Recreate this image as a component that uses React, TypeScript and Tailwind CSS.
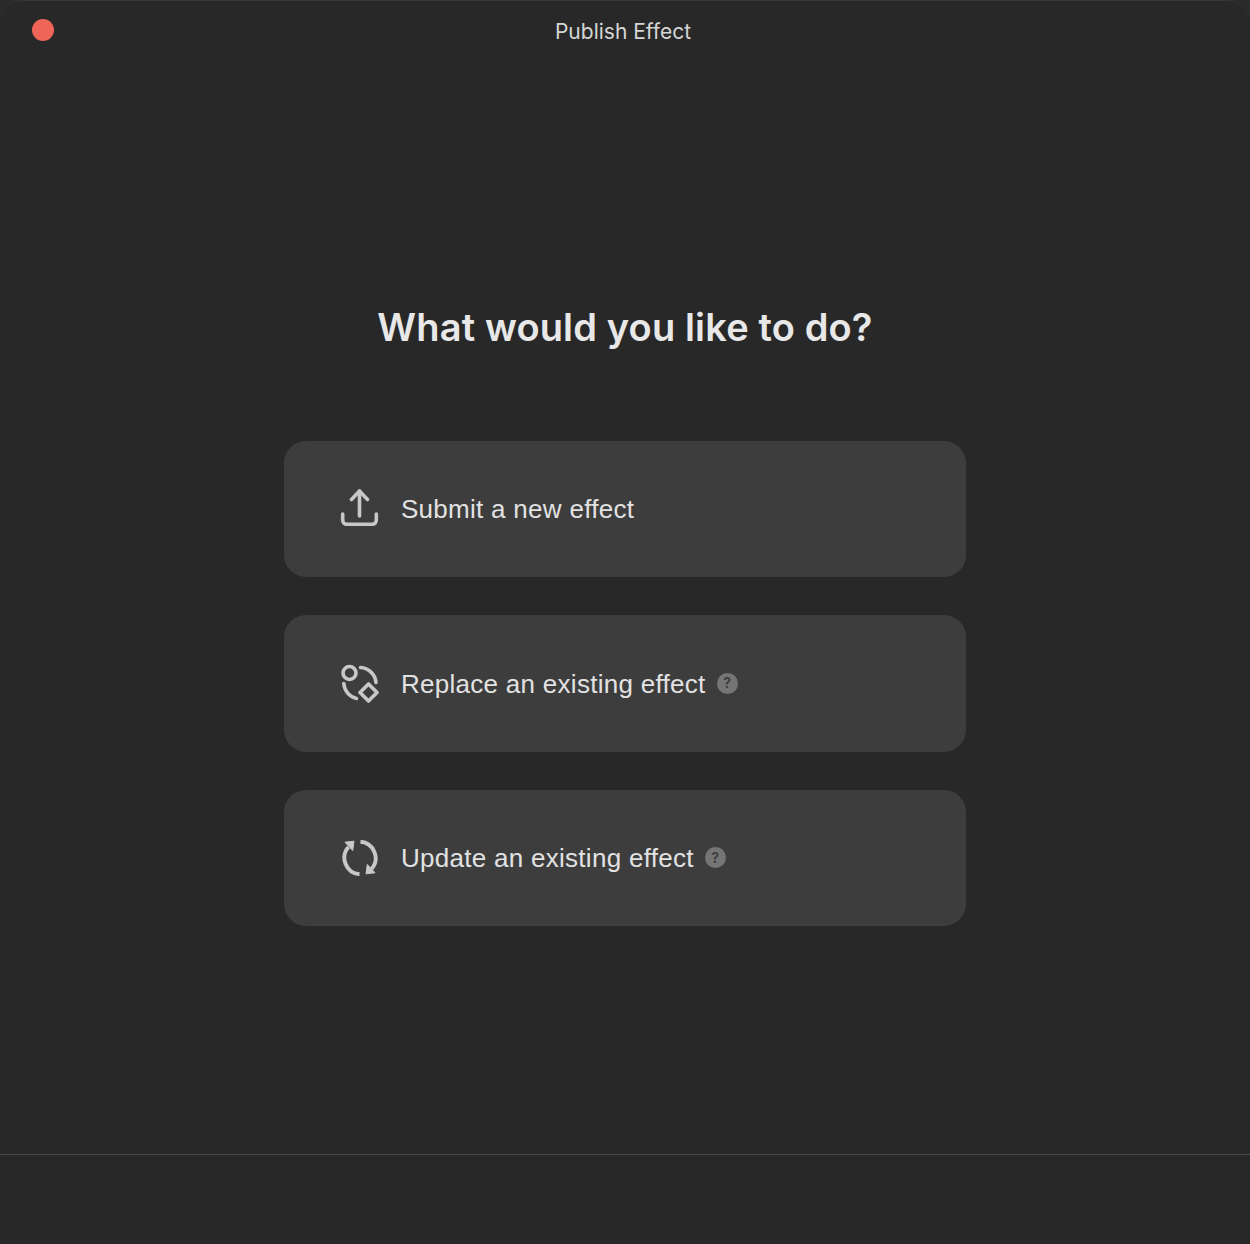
import React from "react";

const Help = () => (
  <span className="flex h-[21px] w-[21px] items-center justify-center rounded-full bg-[#757575] text-[14px] font-bold leading-none text-[#3d3d3d]">?</span>
);

const Row = ({ icon, label, help }: { icon: React.ReactNode; label: string; help?: boolean }) => (
  <div className="flex h-[136.5px] w-[682px] items-center gap-[21px] rounded-[22px] bg-[#3d3d3d] pl-[56px]">
    {icon}
    <div className="flex items-center gap-[11px]">
      <span className="pt-[1px] font-['Liberation_Sans',sans-serif] text-[26px] leading-none tracking-[0.28px] text-[#e2e2e2]">{label}</span>
      {help && <Help />}
    </div>
  </div>
);

const Upload = () => (
  <svg width="40" height="40" viewBox="0 0 40 40" fill="none" stroke="#c8c8c8" strokeWidth="3.600" strokeLinecap="round" strokeLinejoin="round">
    <path d="M19.500 27V2" />
    <path d="M11.500 10.500 19.500 2l8 8.500" />
    <path d="M2.700 25v6.300a4 4 0 0 0 4 4h25.600a4 4 0 0 0 4-4V25" />
  </svg>
);

const Replace = () => (
  <svg width="40" height="40" viewBox="0 0 40 40" fill="none" stroke="#c8c8c8" strokeWidth="3.600" strokeLinecap="round" strokeLinejoin="round">
    <circle cx="9.500" cy="10" r="6.500" />
    <path d="M20.500 4.500a16.500 16.500 0 0 1 15.500 15" />
    <path d="M3.800 20.500a16.500 16.500 0 0 0 12.700 15" />
    <path d="M28.500 21 37 29.500 28.500 38 20 29.500z" />
  </svg>
);

const Update = () => (
  <svg width="40" height="40" viewBox="0 0 40 40" fill="none" stroke="#c8c8c8" strokeLinejoin="round">
    <path d="M20.500 3.700A16.500 16.500 0 0 1 31.500 31" strokeWidth="3.900" />
    <path d="M19.500 36.300A16.500 16.500 0 0 1 8.500 9" strokeWidth="3.900" />
    <path d="M5 4.200 14 3.200 12.700 12.500z" fill="#c8c8c8" strokeWidth="1" />
    <path d="M35 34.800 26 35.800 27.300 26.500z" fill="#c8c8c8" strokeWidth="1" />
  </svg>
);

export default function App() {
  return (
    <div className="h-[1244px] w-[1250px] overflow-hidden bg-[#2a2a2a]">
      <div className="flex h-full flex-col rounded-t-[22px] border-t border-[#363636] bg-[#282828] font-['Inter',sans-serif]">
        <header className="relative flex h-[60px] shrink-0 items-center justify-center">
          <span className="absolute left-[32px] top-[18px] h-[22px] w-[22px] rounded-full bg-[#ef6558]" />
          <span className="pr-[4px] text-[21px] leading-none text-[#d6d6d6]">Publish Effect</span>
        </header>
        <main className="flex flex-1 flex-col items-center pt-[243px]">
          <h1 className="text-[38px] font-semibold leading-[46px] tracking-[0.15px] text-[#e8e8e8]">What would you like to do?</h1>
          <div className="mt-[90.7px] flex flex-col gap-[38px]">
            <Row icon={<Upload />} label="Submit a new effect" />
            <Row icon={<Replace />} label="Replace an existing effect" help />
            <Row icon={<Update />} label="Update an existing effect" help />
          </div>
        </main>
        <footer className="h-[90px] shrink-0 border-t border-[#4a4a4a]" />
      </div>
    </div>
  );
}
